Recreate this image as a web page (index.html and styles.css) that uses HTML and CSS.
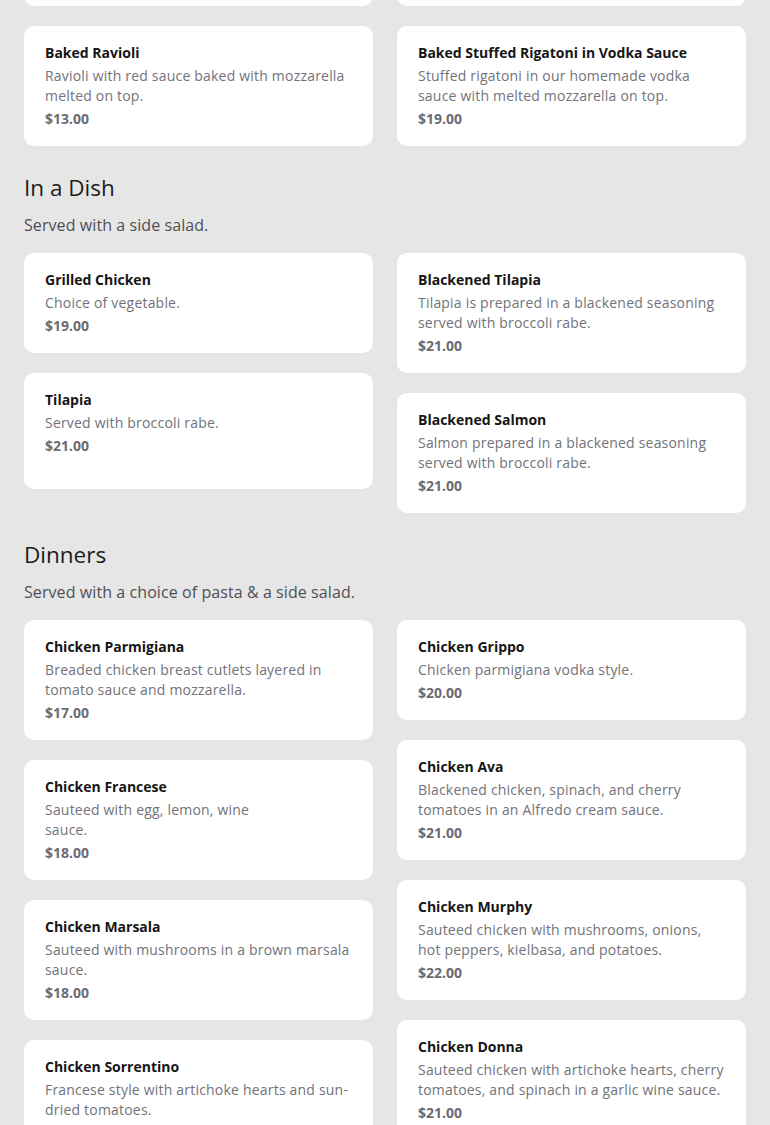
FILE: index.html
```html
<!DOCTYPE html>
<html lang="en">
<head>
<meta charset="utf-8">
<title>Menu</title>
<link rel="stylesheet" href="styles.css">
</head>
<body>
<main class="page">
  <section class="section section--first">
    <div class="grid">
      <div class="stack">
        <article class="card">
          <h3 class="card__title">Baked Ziti</h3>
          <p class="card__desc">Ziti baked with ricotta and mozzarella.</p>
          <p class="card__price">$13.00</p>
        </article>
        <article class="card">
          <h3 class="card__title">Baked Ravioli</h3>
          <p class="card__desc">Ravioli with red sauce baked with mozzarella melted on top.</p>
          <p class="card__price">$13.00</p>
        </article>
      </div>
      <div class="stack">
        <article class="card">
          <h3 class="card__title">Baked Lasagna</h3>
          <p class="card__desc">Homemade lasagna baked with mozzarella.</p>
          <p class="card__price">$15.00</p>
        </article>
        <article class="card">
          <h3 class="card__title">Baked Stuffed Rigatoni in Vodka Sauce</h3>
          <p class="card__desc">Stuffed rigatoni in our homemade vodka sauce with melted mozzarella on top.</p>
          <p class="card__price">$19.00</p>
        </article>
      </div>
    </div>
  </section>

  <section class="section">
    <h2 class="section__title">In a Dish</h2>
    <p class="section__note">Served with a side salad.</p>
    <div class="grid">
      <div class="stack">
        <article class="card">
          <h3 class="card__title">Grilled Chicken</h3>
          <p class="card__desc">Choice of vegetable.</p>
          <p class="card__price">$19.00</p>
        </article>
        <article class="card card--extra">
          <h3 class="card__title">Tilapia</h3>
          <p class="card__desc">Served with broccoli rabe.</p>
          <p class="card__price">$21.00</p>
        </article>
      </div>
      <div class="stack">
        <article class="card">
          <h3 class="card__title">Blackened Tilapia</h3>
          <p class="card__desc">Tilapia is prepared in a blackened seasoning served with broccoli rabe.</p>
          <p class="card__price">$21.00</p>
        </article>
        <article class="card">
          <h3 class="card__title">Blackened Salmon</h3>
          <p class="card__desc">Salmon prepared in a blackened seasoning served with broccoli rabe.</p>
          <p class="card__price">$21.00</p>
        </article>
      </div>
    </div>
  </section>

  <section class="section">
    <h2 class="section__title">Dinners</h2>
    <p class="section__note">Served with a choice of pasta &amp; a side salad.</p>
    <div class="grid">
      <div class="stack">
        <article class="card">
          <h3 class="card__title">Chicken Parmigiana</h3>
          <p class="card__desc">Breaded chicken breast cutlets layered in tomato sauce and mozzarella.</p>
          <p class="card__price">$17.00</p>
        </article>
        <article class="card">
          <h3 class="card__title">Chicken Francese</h3>
          <p class="card__desc">Sauteed with egg, lemon, wine<br>sauce.</p>
          <p class="card__price">$18.00</p>
        </article>
        <article class="card">
          <h3 class="card__title">Chicken Marsala</h3>
          <p class="card__desc">Sauteed with mushrooms in a brown marsala sauce.</p>
          <p class="card__price">$18.00</p>
        </article>
        <article class="card">
          <h3 class="card__title">Chicken Sorrentino</h3>
          <p class="card__desc">Francese style with artichoke hearts and sun-dried tomatoes.</p>
          <p class="card__price">$19.00</p>
        </article>
      </div>
      <div class="stack">
        <article class="card">
          <h3 class="card__title">Chicken Grippo</h3>
          <p class="card__desc">Chicken parmigiana vodka style.</p>
          <p class="card__price">$20.00</p>
        </article>
        <article class="card">
          <h3 class="card__title">Chicken Ava</h3>
          <p class="card__desc">Blackened chicken, spinach, and cherry tomatoes in an Alfredo cream sauce.</p>
          <p class="card__price">$21.00</p>
        </article>
        <article class="card">
          <h3 class="card__title">Chicken Murphy</h3>
          <p class="card__desc">Sauteed chicken with mushrooms, onions, hot peppers, kielbasa, and potatoes.</p>
          <p class="card__price">$22.00</p>
        </article>
        <article class="card">
          <h3 class="card__title">Chicken Donna</h3>
          <p class="card__desc">Sauteed chicken with artichoke hearts, cherry tomatoes, and spinach in a garlic wine sauce.</p>
          <p class="card__price">$21.00</p>
        </article>
      </div>
    </div>
  </section>
</main>
</body>
</html>
```

FILE: styles.css
```css
* { box-sizing: border-box; }

html, body {
  margin: 0;
  padding: 0;
  background: #e6e6e6;
}

body {
  font-family: "Open Sans", "Noto Sans", sans-serif;
  color: #1c1c1c;
}

.page {
  padding: 0 24px 40px;
  margin-top: -94px;
}

.section {
  padding-top: 26px;
}

.section--first {
  padding-top: 0;
}

.section__title {
  margin: 0;
  font-size: 22.5px;
  line-height: 32px;
  font-weight: 400;
  color: #1c1c1c;
}

.section__note {
  margin: 9px 0 16px;
  font-size: 16px;
  line-height: 24px;
  letter-spacing: 0.08px;
  color: #4f4f55;
}

.grid {
  display: grid;
  grid-template-columns: 1fr 1fr;
  column-gap: 24px;
  align-items: start;
}

.stack {
  display: flex;
  flex-direction: column;
  gap: 20px;
}

.card {
  background: #ffffff;
  border-radius: 10px;
  padding: 17px 21px 17px;
}

.card--extra {
  padding-bottom: 33px;
}

.card__title {
  margin: 0 0 3px;
  font-size: 14px;
  line-height: 20px;
  font-weight: 700;
  color: #161616;
}

.card__desc {
  margin: 0 0 3px;
  font-size: 14px;
  line-height: 20px;
  letter-spacing: 0.2px;
  color: #72727a;
}

.card__price {
  margin: 0;
  font-size: 14px;
  line-height: 20px;
  font-weight: 700;
  color: #6b6b73;
}
```
